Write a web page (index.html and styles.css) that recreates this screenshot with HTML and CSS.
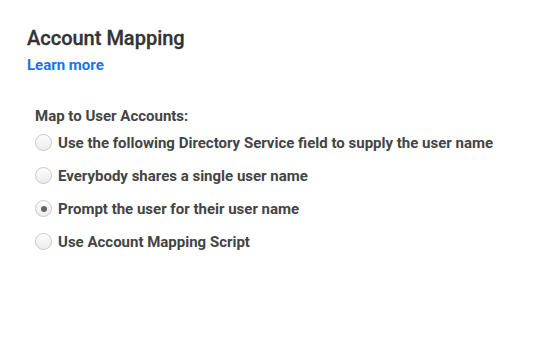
FILE: index.html
```html
<!DOCTYPE html>
<html>
<head>
<meta charset="utf-8">
<link rel="stylesheet" href="styles.css">
</head>
<body>
<div class="page">
  <h1 class="title">Account Mapping</h1>
  <a class="learn" href="#">Learn more</a>
  <div class="group">
    <div class="group-label">Map to User Accounts:</div>
    <label class="option"><span class="radio"></span><span>Use the following Directory Service field to supply the user name</span></label>
    <label class="option"><span class="radio"></span><span>Everybody shares a single user name</span></label>
    <label class="option"><span class="radio checked"></span><span>Prompt the user for their user name</span></label>
    <label class="option"><span class="radio"></span><span>Use Account Mapping Script</span></label>
  </div>
</div>
</body>
</html>
```
FILE: styles.css
```css
html, body {
  margin: 0;
  padding: 0;
  background: #fff;
}
body {
  font-family: Roboto, "Noto Sans", sans-serif;
  color: #444;
}
.page {
  padding: 26px 0 0 27px;
  display: flex;
  flex-direction: column;
  align-items: flex-start;
}
.title {
  margin: 0;
  font-size: 20px;
  font-weight: 500;
  line-height: 24px;
  color: #333;
  -webkit-text-stroke: 0.3px #333;
}
.learn {
  margin-top: 6px;
  font-size: 15px;
  font-weight: 700;
  line-height: 18px;
  color: #1a73e8;
  text-decoration: none;
}
.group {
  margin-top: 33px;
  margin-left: 8px;
  display: flex;
  flex-direction: column;
}
.group-label {
  font-size: 15px;
  font-weight: 700;
  line-height: 18px;
  color: #444;
  margin-bottom: 1px;
}
.option {
  display: flex;
  align-items: center;
  gap: 6px;
  height: 33px;
  font-size: 15px;
  font-weight: 700;
  color: #444;
}
.radio {
  width: 17px;
  height: 17px;
  box-sizing: border-box;
  border-radius: 50%;
  border: 1px solid #c8c8c8;
  background: linear-gradient(#fdfdfd, #ececec);
  display: flex;
  align-items: center;
  justify-content: center;
}
.radio.checked::after {
  content: "";
  width: 6px;
  height: 6px;
  border-radius: 50%;
  background: #666;
}
```
